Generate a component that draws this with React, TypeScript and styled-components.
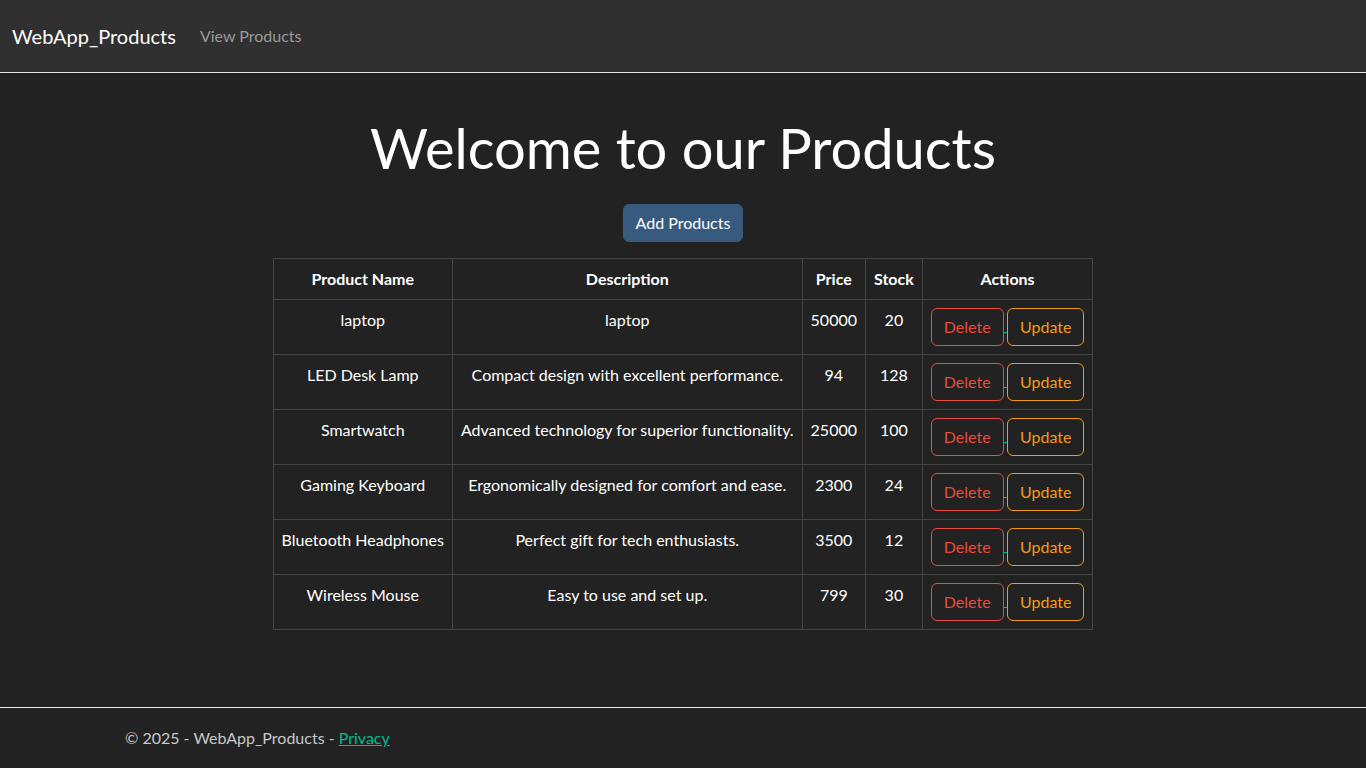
import React from 'react';
import styled, { createGlobalStyle } from 'styled-components';

const GlobalStyle = createGlobalStyle`
  html, body {
    margin: 0;
    padding: 0;
    background: #222222;
    color: #ffffff;
    font-family: Lato, "Open Sans", "Liberation Sans", sans-serif;
    font-size: 16px;
    line-height: 1.5;
  }
  * { box-sizing: border-box; }
`;

type Product = {
  name: string;
  description: string;
  price: number;
  stock: number;
};

const products: Product[] = [
  { name: 'laptop', description: 'laptop', price: 50000, stock: 20 },
  { name: 'LED Desk Lamp', description: 'Compact design with excellent performance.', price: 94, stock: 128 },
  { name: 'Smartwatch', description: 'Advanced technology for superior functionality.', price: 25000, stock: 100 },
  { name: 'Gaming Keyboard', description: 'Ergonomically designed for comfort and ease.', price: 2300, stock: 24 },
  { name: 'Bluetooth Headphones', description: 'Perfect gift for tech enthusiasts.', price: 3500, stock: 12 },
  { name: 'Wireless Mouse', description: 'Easy to use and set up.', price: 799, stock: 30 },
];

// Layout
const Page = styled.div`
  min-height: 100vh;
  display: flex;
  flex-direction: column;
`;

const Navbar = styled.nav`
  height: 73px;
  display: flex;
  align-items: center;
  padding: 0 12px;
  background: #303030;
  border-bottom: 1px solid #e6e6e6;
`;

const Brand = styled.a`
  font-size: 20px;
  color: #ffffff;
  text-decoration: none;
  margin-right: 16px;
`;

const NavLink = styled.a`
  font-size: 16px;
  color: #9a9a9a;
  text-decoration: none;
  padding: 0 8px;
`;

const Main = styled.main`
  flex: 1;
  display: flex;
  flex-direction: column;
  align-items: center;
  padding-top: 41px;
`;

const Title = styled.h1`
  margin: 0 0 23px;
  font-size: 56px;
  font-weight: 400;
  line-height: 1.2;
`;

const PrimaryButton = styled.button`
  font-family: inherit;
  font-size: 16px;
  line-height: 24px;
  padding: 6px 12px;
  color: #ffffff;
  background: #375a7f;
  border: 1px solid #375a7f;
  border-radius: 6px;
  cursor: pointer;
`;

const Table = styled.table`
  margin-top: 16px;
  border-collapse: collapse;
  color: #ffffff;
`;

const Th = styled.th`
  border: 1px solid #444444;
  padding: 8px;
  font-weight: 700;
  text-align: center;
  vertical-align: top;
`;

const Td = styled.td`
  border: 1px solid #444444;
  padding: 8px;
  text-align: center;
  vertical-align: top;
  white-space: nowrap;
`;

const OutlineButton = styled.button<{ $tone: string }>`
  font-family: inherit;
  font-size: 16px;
  line-height: 24px;
  padding: 6px 12px;
  color: ${(p) => p.$tone};
  background: transparent;
  border: 1px solid ${(p) => p.$tone};
  border-radius: 6px;
  cursor: pointer;
  vertical-align: middle;
`;

const Gap = styled.a`
  color: #00bc8c;
  font-size: 13px;
  text-decoration: underline;
  vertical-align: middle;
`;

const Footer = styled.footer`
  border-top: 1px solid #e6e6e6;
  height: 61px;
  display: flex;
  align-items: center;
`;

const FooterInner = styled.div`
  width: 1140px;
  margin: 0 auto;
  padding: 0 12px;
  color: #c8c8c8;
  font-size: 16px;
`;

const FooterLink = styled.a`
  color: #00bc8c;
  text-decoration: underline;
`;

export default function App(): JSX.Element {
  return (
    <>
      <GlobalStyle />
      <Page>
        <Navbar>
          <Brand href="#">WebApp_Products</Brand>
          <NavLink href="#">View Products</NavLink>
        </Navbar>

        <Main>
          <Title>Welcome to our Products</Title>
          <PrimaryButton type="button">Add Products</PrimaryButton>

          <Table>
            <thead>
              <tr>
                <Th>Product Name</Th>
                <Th>Description</Th>
                <Th>Price</Th>
                <Th>Stock</Th>
                <Th>Actions</Th>
              </tr>
            </thead>
            <tbody>
              {products.map((p) => (
                <tr key={p.name}>
                  <Td>{p.name}</Td>
                  <Td>{p.description}</Td>
                  <Td>{p.price}</Td>
                  <Td>{p.stock}</Td>
                  <Td>
                    <OutlineButton type="button" $tone="#e74c3c">Delete</OutlineButton>
                    <Gap href="#">{'\u00a0'}</Gap>
                    <OutlineButton type="button" $tone="#f39c12">Update</OutlineButton>
                  </Td>
                </tr>
              ))}
            </tbody>
          </Table>
        </Main>

        <Footer>
          <FooterInner>
            © 2025 - WebApp_Products - <FooterLink href="#">Privacy</FooterLink>
          </FooterInner>
        </Footer>
      </Page>
    </>
  );
}
